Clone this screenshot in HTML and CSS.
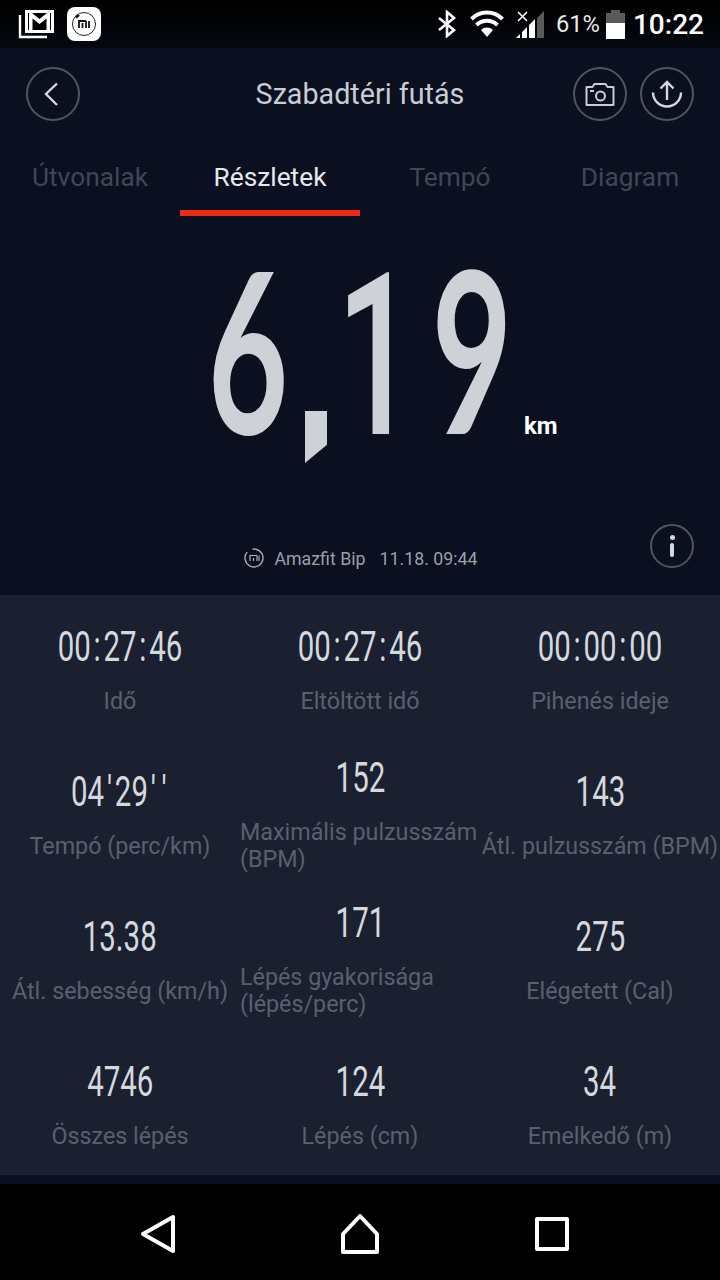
FILE: index.html
```html
<!DOCTYPE html>
<html lang="hu">
  <head>
    <meta charset="UTF-8" />
    <title>Szabadtéri futás</title>
    <link rel="stylesheet" href="styles.css">
  </head>
  <body>
    <div class="statusbar">
      <div class="status-left">
        <svg width="36" height="30" viewBox="0 0 36 30"><path d="M2 6v22h27" fill="none" stroke="#fff" stroke-width="2.4"/><rect x="7" y="1" width="29" height="23" fill="#fff"/><rect x="10" y="4" width="23" height="17" fill="#000"/><path d="M11 4h3l7.500 6L29 4h3v17h-3.500V9.500l-7 5.500-7-5.500V21H11z" fill="#fff"/></svg>
        <div class="mi-badge"><svg width="28" height="28" viewBox="0 0 28 28"><circle cx="14" cy="14" r="11.500" fill="none" stroke="#222" stroke-width="1" /><path d="M6 7.500L9 4.800" stroke="#111" stroke-width="2.400"/><path d="M9 18v-7h7M12.500 18v-5M16 18v-7M19 18v-7" fill="none" stroke="#111" stroke-width="1.800"/></svg></div>
      </div>
      <div class="status-right">
        <svg class="ic-bt" width="20" height="28" viewBox="0 0 20 28"><path d="M2 8l15 12-7 6V2l7 6L2 20" fill="none" stroke="#fff" stroke-width="2.600"/></svg>
        <svg class="ic-wifi" width="34" height="28" viewBox="0 0 34 28"><path d="M1.500 9a22 22 0 0 1 31 0M6.500 15a15 15 0 0 1 21 0" fill="none" stroke="#fff" stroke-width="4"/><path d="M17 27l-6-7a8.500 8.500 0 0 1 12 0z" fill="#fff"/></svg>
        <svg class="ic-signal" width="28" height="28" viewBox="0 0 28 28"><path d="M21 8l7-7v27h-7z" fill="#5a5a5a"/><path d="M0 28l4-4v4zM6 28v-6l5-5v11zM13 28V15l6-6v19z" fill="#fff"/><path d="M2 2l9 9M11 2l-9 9" stroke="#fff" stroke-width="1.600"/></svg>
        <span class="battery-pct">61%</span>
        <div class="battery"><div class="battery-cap"></div><div class="battery-body"><div class="battery-fill"></div></div></div>
        <span class="clock">10:22</span>
      </div>
    </div>

    <div class="topbar">
      <button class="round-btn"><svg width="24" height="30" viewBox="0 0 24 30"><path d="M16 4.500L5 15l11 11" fill="none" stroke="#d5d8dd" stroke-width="2.400"/></svg></button>
      <div class="title">Szabadtéri futás</div>
      <div class="top-actions">
        <button class="round-btn"><svg width="32" height="28" viewBox="0 0 32 28"><path d="M2.500 7h6l2-3h11l2 3h6v18h-27z" fill="none" stroke="#c9ccd2" stroke-width="2" stroke-linejoin="round"/><circle cx="16.500" cy="16" r="4.500" fill="none" stroke="#c9ccd2" stroke-width="2"/><path d="M6 11h4" stroke="#c9ccd2" stroke-width="2"/></svg></button>
        <button class="round-btn"><svg width="32" height="32" viewBox="0 0 32 32"><path d="M2 14.500a14 14 0 0 0 28 0" fill="none" stroke="#d5d8dd" stroke-width="2.400" /><path d="M16 22V4M9.500 10.500L16 4l6.500 6.500" fill="none" stroke="#d5d8dd" stroke-width="2.400"/></svg></button>
      </div>
    </div>

    <div class="tabs">
      <div class="tab">Útvonalak</div>
      <div class="tab active">Részletek</div>
      <div class="tab">Tempó</div>
      <div class="tab">Diagram</div>
    </div>

    <div class="hero">
      <div class="distance">
        <div class="big">
          <div class="slot round"><span>6</span></div>
          <span class="comma">,</span>
          <div class="slot one"><span>1</span></div>
          <div class="slot round"><span>9</span></div>
        </div>
        <span class="unit">km</span>
      </div>
      <div class="device">
        <svg width="22" height="22" viewBox="0 0 22 22"><circle cx="11" cy="11" r="9" fill="none" stroke="#aab0b8" stroke-width="1.400" stroke-dasharray="50 7" transform="rotate(-100 11 11)"/><path d="M7 14V8.500h7M10.500 14V11M14 14V8.500M16 14V8.500" fill="none" stroke="#aab0b8" stroke-width="1.200"/></svg>
        <span>Amazfit Bip</span><span>11.18. 09:44</span>
      </div>
      <div class="info"><div class="info-dot"></div><div class="info-bar"></div></div>
    </div>

    <div class="stats">
      <div class="stat"><div class="val">00<span class="sep">:</span>27<span class="sep">:</span>46</div><div class="lbl">Idő</div></div>
      <div class="stat"><div class="val">00<span class="sep">:</span>27<span class="sep">:</span>46</div><div class="lbl">Eltöltött idő</div></div>
      <div class="stat"><div class="val">00<span class="sep">:</span>00<span class="sep">:</span>00</div><div class="lbl">Pihenés ideje</div></div>
      <div class="stat"><div class="val">04<span class="sep">'</span>29<span class="sep">'</span><span class="sep">'</span></div><div class="lbl">Tempó (perc/km)</div></div>
      <div class="stat two"><div class="val">152</div><div class="lbl">Maximális pulzusszám (BPM)</div></div>
      <div class="stat"><div class="val">143</div><div class="lbl">Átl. pulzusszám (BPM)</div></div>
      <div class="stat"><div class="val">13.38</div><div class="lbl">Átl. sebesség (km/h)</div></div>
      <div class="stat two"><div class="val">171</div><div class="lbl">Lépés gyakorisága (lépés/perc)</div></div>
      <div class="stat"><div class="val">275</div><div class="lbl">Elégetett (Cal)</div></div>
      <div class="stat"><div class="val">4746</div><div class="lbl">Összes lépés</div></div>
      <div class="stat"><div class="val">124</div><div class="lbl">Lépés (cm)</div></div>
      <div class="stat"><div class="val">34</div><div class="lbl">Emelkedő (m)</div></div>
    </div>

    <div class="navbar">
      <svg class="nav-back" width="36" height="40" viewBox="0 0 36 40"><path d="M33 3v34L3 20z" fill="none" stroke="#fff" stroke-width="4" stroke-linejoin="round"/></svg>
      <svg width="42" height="42" viewBox="0 0 42 42"><path d="M21 3L4 21v18h34V21z" fill="none" stroke="#fff" stroke-width="4" stroke-linejoin="round"/></svg>
      <svg width="34" height="34" viewBox="0 0 34 34"><rect x="2" y="2" width="30" height="30" fill="none" stroke="#fff" stroke-width="4" stroke-linejoin="round"/></svg>
    </div>
  </body>
</html>
```

FILE: styles.css
```css
body {
  margin: 0;
  width: 720px;
  height: 1280px;
  overflow: hidden;
  background: #0a1020;
  font-family: Roboto, sans-serif;
  color: #fff;
}

.statusbar {
  height: 48px;
  background: linear-gradient(#000, #05080f);
  display: flex;
  justify-content: space-between;
  align-items: center;
  padding: 0 16px 0 18px;
}
.status-left, .status-right {
  display: flex;
  align-items: center;
}
.status-left { gap: 13px; }
.status-right { gap: 7px; }
.ic-wifi { margin-left: 6px; }
.ic-signal { margin-left: 5px; }
.ic-signal + .battery-pct { margin-left: 5px; }
.mi-badge {
  width: 34px;
  height: 34px;
  border-radius: 8px;
  background: #fff;
  display: flex;
  align-items: center;
  justify-content: center;
}
.battery-pct { font-size: 23.7px; color: #e8e8e8; margin-right: -1px; }
.battery {
  width: 19px;
  height: 29px;
  display: flex;
  flex-direction: column;
  align-items: center;
}
.battery-cap { width: 9px; height: 3px; background: #5a5a5a; }
.battery-body { width: 19px; height: 26px; background: #5a5a5a; display: flex; align-items: flex-end; }
.battery-fill { width: 19px; height: 16px; background: #fff; }
.clock { font-size: 28px; font-weight: 500; margin-left: 1px; }

.topbar {
  height: 92px;
  display: flex;
  align-items: center;
  justify-content: space-between;
  padding: 0 26px;
  position: relative;
}
.title {
  position: absolute;
  left: 0;
  right: 0;
  text-align: center;
  font-size: 28.7px;
  color: #c9ccd2;
}
.top-actions { display: flex; gap: 13px; }
.round-btn {
  width: 54px;
  height: 54px;
  padding: 0;
  border-radius: 50%;
  border: 2px solid #50555f;
  background: transparent;
  display: flex;
  align-items: center;
  justify-content: center;
}

.tabs { display: flex; height: 76px; }
.tab {
  flex: 1;
  text-align: center;
  font-size: 26.3px;
  line-height: 74px;
  color: #3f4757;
  box-sizing: border-box;
}
.tab.active {
  color: #e6e8ec;
  border-bottom: 6px solid #ee2a1b;
}

.hero {
  height: 379px;
  position: relative;
  display: flex;
  flex-direction: column;
  align-items: center;
}
.distance {
  height: 331px;
  position: relative;
  width: 720px;
  display: flex;
  justify-content: center;
}
.big {
  display: flex;
  align-items: flex-start;
  margin-top: 24px;
  height: 234px;
  color: #ced1d6;
  line-height: 234px;
  white-space: nowrap;
}
.slot {
  display: flex;
  justify-content: center;
}
.slot.round {
  width: 68px;
  font-family: Lato, sans-serif;
  font-size: 224px;
  font-weight: 700;
  margin-top: -9px;
}
.slot.round span { transform: scaleX(0.62); }
.slot.one {
  width: 44px;
  margin: 0 40px 0 27px;
  font-size: 226px;
  font-weight: 500;
}
.slot.one span { transform: scaleX(0.62); }
.slot span { display: block; }
.comma {
  width: 22px;
  height: 52px;
  margin: 171px 0 0 23px;
  background: #ced1d6;
  clip-path: polygon(0 0, 100% 0, 100% 65%, 0 100%);
  color: transparent;
  font-size: 30px;
  line-height: 40px;
  text-align: center;
}
.unit {
  position: absolute;
  left: 524px;
  top: 196px;
  font-size: 24px;
  font-weight: 700;
}
.device {
  display: flex;
  align-items: center;
  gap: 14px;
  font-size: 17.8px;
  color: #9a9fa8;
  margin-left: 1px;
}
.device svg { margin-right: -5px; }
.info {
  position: absolute;
  right: 26px;
  top: 308px;
  width: 40px;
  height: 40px;
  border: 2px solid #50555f;
  border-radius: 50%;
  display: flex;
  flex-direction: column;
  align-items: center;
  justify-content: center;
  gap: 3px;
}
.info-dot { width: 5px; height: 5px; border-radius: 50%; background: #d5d8dd; }
.info-bar { width: 4px; height: 14px; border-radius: 2px; background: #d5d8dd; }

.stats {
  height: 580px;
  background: #1a2030;
  display: grid;
  grid-template-columns: repeat(3, 240px);
  grid-template-rows: 145px 145px 145px 145px;
}
.stat {
  display: flex;
  flex-direction: column;
  align-items: center;
  padding-top: 27px;
}
.stat.two { padding-top: 13px; }
.stat.two .lbl { text-align: left; width: 240px; white-space: normal; }
.val {
  font-size: 42px;
  line-height: 50px;
  color: #d5d8dd;
  transform: scaleX(0.7);
  white-space: nowrap;
}
.sep { margin: 0 4px; }
.lbl {
  font-size: 23.3px;
  line-height: 27px;
  margin-top: 16px;
  color: #59606e;
  white-space: nowrap;
}

.navbar {
  height: 96px;
  margin-top: 9px;
  padding: 3px 11px 0 0;
  box-sizing: border-box;
  background: #000;
  display: flex;
  justify-content: center;
  align-items: center;
  gap: 154px;
}
.nav-back { margin-right: 9px; }
```
